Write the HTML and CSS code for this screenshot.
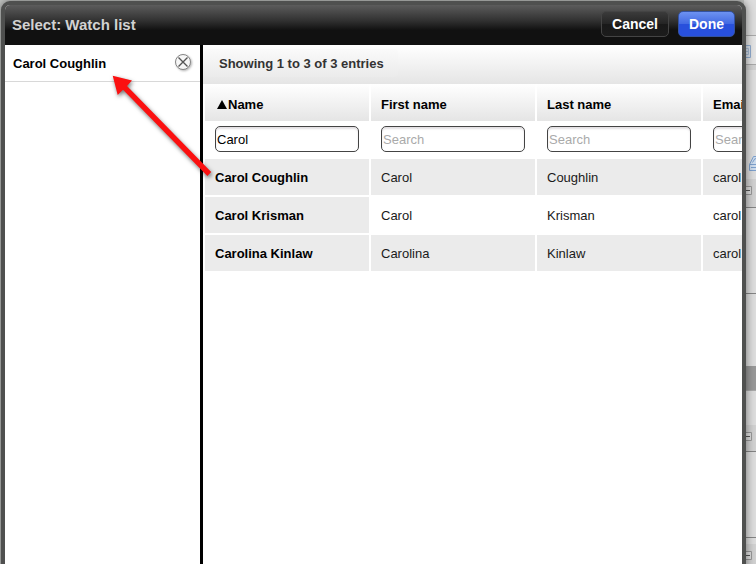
FILE: index.html
```
<!DOCTYPE html>
<html lang="en">
<head>
<meta charset="utf-8">
<title>Select: Watch list</title>
<link rel="stylesheet" href="styles.css">
</head>
<body>
<svg class="backdrop" width="12" height="564" viewBox="744 0 12 564" aria-hidden="true">
  <path fill="#dedede" d="M744 0h12v564h-12z"/>
  <path fill="#e6e6e6" d="M744 36h12v28h-12z"/>
  <path fill="#d2d2d2" d="M744 65h12v5h-12zM744 179h12v28h-12zM744 425h12v26h-12zM744 544h12v20h-12z"/>
  <path fill="#999" d="M744 366h12v25h-12z"/>
  <path stroke="#aaa" d="M744 35.500h12M744 64.500h12M744 390.500h12"/>
  <path stroke="#858585" d="M744 207.500h12M744 293.500h12M744 451.500h12M744 537.500h12"/>
  <path fill="#d9e2ed" stroke="#91add0" d="M743.500 45.500h7v12h-7z"/>
  <path fill="none" stroke="#a9bdd5" d="M744 48.500h4.500v6h-4.500M744 51.500h4"/>
  <path fill="#cfdeef" stroke="#7da1ce" d="M749.500 164.500l4-8h4v14h-8zM749.500 164.500h8"/>
  <path fill="none" stroke="#7da1ce" d="M752.500 162.500l2.500-4 2 1M751 167.500h5"/>
  <path fill="#ddd" stroke="#999" d="M743.500 186.500h8v8h-8zM743.500 432.500h8v8h-8zM743.500 551.500h8v8h-8z"/>
  <path stroke="#555" d="M744 190.500h6M744 436.500h6M744 555.500h6"/>
</svg>
<div class="dialog">
  <header class="titlebar">
    <h1>Select: Watch list</h1>
    <button class="btn cancel">Cancel</button>
    <button class="btn done">Done</button>
  </header>
  <div class="content">
    <aside class="selected">
      <div class="chosen">
        <span>Carol Coughlin</span>
        <svg class="remove" width="18" height="18" viewBox="0 0 18 18" aria-hidden="true">
          <circle cx="9" cy="9" r="7.500" fill="#f7f7f7" stroke="#858585"/>
          <path d="M4.500 4.500l9 9M13.500 4.500l-9 9" stroke="#555" stroke-width="1.400"/>
        </svg>
      </div>
    </aside>
    <main class="results">
      <div class="summary"><span>Showing 1 to 3 of 3 entries</span></div>
      <div class="table">
        <div class="th"><svg width="10" height="9" viewBox="0 0 10 9" aria-hidden="true"><path d="M5 0l5 9H0z"/></svg>Name</div>
        <div class="th">First name</div>
        <div class="th">Last name</div>
        <div class="th">Email</div>
        <div class="filter"><input value="Carol" aria-label="Name"></div>
        <div class="filter"><input placeholder="Search" aria-label="First name"></div>
        <div class="filter"><input placeholder="Search" aria-label="Last name"></div>
        <div class="filter"><input placeholder="Search" aria-label="Email"></div>
        <div class="td name">Carol Coughlin</div><div class="td shade">Carol</div><div class="td shade">Coughlin</div><div class="td shade">carol</div>
        <div class="td name">Carol Krisman</div><div class="td">Carol</div><div class="td">Krisman</div><div class="td">carol</div>
        <div class="td name">Carolina Kinlaw</div><div class="td shade">Carolina</div><div class="td shade">Kinlaw</div><div class="td shade">carol</div>
      </div>
    </main>
  </div>
</div>
<svg class="arrow" width="120" height="120" viewBox="100 66 120 120" aria-hidden="true">
  <path fill="#fb1010" d="M112.700 75.700L132 80.600L127 86L211.200 172.100L207.400 175.900L123 89.800L117.700 95z"/>
</svg>
</body>
</html>
```

FILE: styles.css
```
* { box-sizing: border-box; }
body {
  margin: 0;
  width: 756px;
  height: 564px;
  overflow: hidden;
  position: relative;
  background: #c4c6c4;
  font: 13px "Liberation Sans", Arial, sans-serif;
  color: #000;
}
.backdrop { position: absolute; top: 0; right: 0; }
.dialog {
  position: relative;
  width: 745px;
  height: 575px;
  margin: 1px 0 0 1px;
  border: 4px solid #4f504f;
  border-radius: 9px;
  overflow: hidden;
  background: #fff;
  box-shadow: 0 0 10px rgba(0, 0, 0, .5);
  display: flex;
  flex-direction: column;
}
.titlebar {
  height: 40px;
  flex: none;
  display: flex;
  align-items: center;
  padding: 0 7px;
  background: linear-gradient(#5c5c5c, #303030 40%, #111 63%, #111);
}
.titlebar h1 {
  flex: 1;
  margin: 0;
  font-size: 15px;
  line-height: 18px;
  color: #d2d2d2;
}
.btn {
  height: 26px;
  padding: 0 0 1px;
  border-radius: 5px;
  color: #fff;
  font: bold 14px "Liberation Sans", Arial, sans-serif;
  margin-top: -2px;
}
.cancel {
  width: 68px;
  border: 1px solid #444;
  background: linear-gradient(#3b3b3b, #242424 50%, #191919 51%, #1c1c1c);
}
.done {
  width: 57px;
  margin-left: 9px;
  margin-right: 0;
  border: 1px solid #3352a2;
  background: linear-gradient(#6d92f2, #4169e2 50%, #2850dc 51%, #2850dc);
}
.content { flex: 1; display: flex; min-height: 0; }
.selected { width: 195px; flex: none; }
.chosen {
  height: 37px;
  display: flex;
  align-items: center;
  justify-content: space-between;
  padding: 1px 8px 0;
  border-bottom: 1px solid #d8d8d8;
  font-weight: bold;
}
.remove { filter: drop-shadow(1px 1px 1px rgba(0, 0, 0, .3)); margin-top: -3px; }
.results {
  flex: 1;
  min-width: 0;
  overflow: hidden;
  border-left: 3px solid #000;
  padding-left: 2px;
}
.summary {
  height: 39px;
  margin-left: -2px;
  padding: 4px 0 0 2px;
  background: linear-gradient(#fff, #e5e5e5);
}
.summary span {
  display: block;
  width: 193px;
  height: 28px;
  padding-left: 14px;
  border-radius: 4px;
  background: linear-gradient(#fafafa, #ebebeb);
  font-weight: bold;
  line-height: 29px;
  color: #333;
}
.table {
  display: grid;
  grid-template-columns: repeat(4, 164px);
  grid-template-rows: 37px 38px repeat(3, 38px);
  column-gap: 2px;
}
.th {
  padding: 3px 10px 0;
  display: flex;
  align-items: center;
  font-weight: bold;
  background: linear-gradient(#fff, #e5e5e5);
}
.th svg { margin: 0 1px 0 2px; }
.filter { padding: 5px 10px 0; }
.filter input {
  display: block;
  width: 144px;
  height: 26px;
  padding: 1px 1px 0;
  border: 1px solid #444;
  border-radius: 5px;
  background: #fff;
  box-shadow: inset 0 2px 2px #e3e0e3;
  font: 13px "Liberation Sans", Arial, sans-serif;
  color: #000;
}
.filter input::placeholder { color: #aaa; opacity: 1; }
.td {
  height: 36px;
  padding: 1px 10px 0;
  line-height: 36px;
  color: #1a1a1a;
}
.name { background: #ebebeb; font-weight: bold; color: #000; }
.shade { background: #ebebeb; }
.arrow {
  position: absolute;
  left: 100px;
  top: 66px;
  filter: drop-shadow(1px 2px 2px rgba(0, 0, 0, .55));
}
```
